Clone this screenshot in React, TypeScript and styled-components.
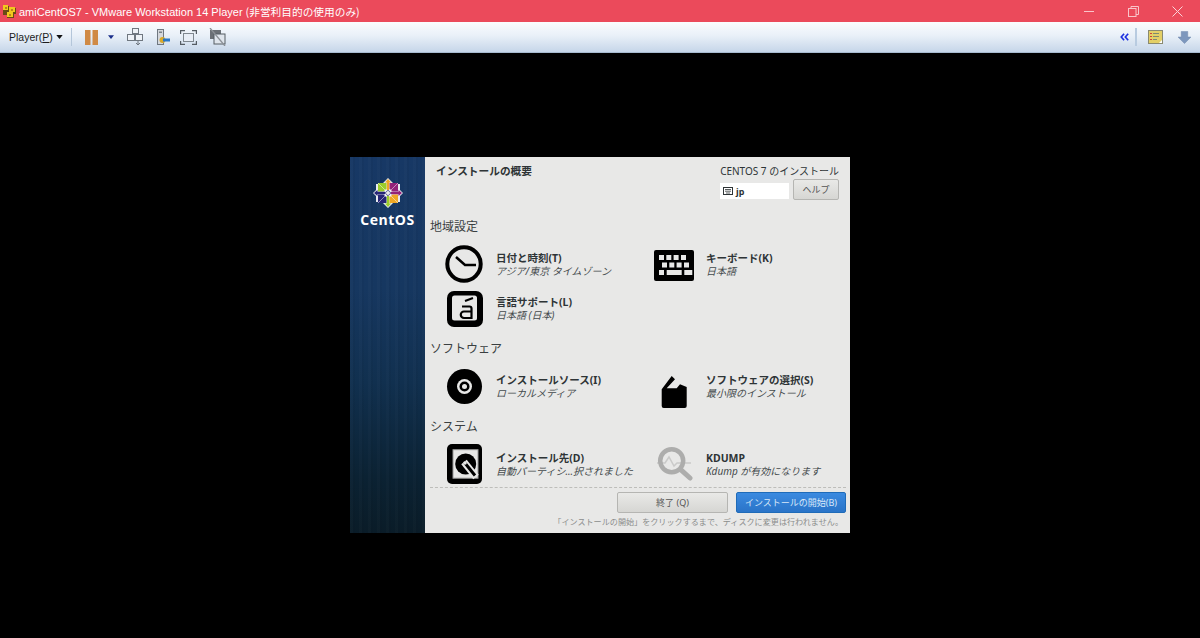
import React from 'react';
import styled, { createGlobalStyle } from 'styled-components';

const GlobalStyle = createGlobalStyle`
  html, body {
    margin: 0;
    height: 100%;
    background: #000;
    overflow: hidden;
  }
`;

const Page = styled.div`
  width: 1200px;
  height: 638px;
  display: flex;
  flex-direction: column;
  font-family: 'Noto Sans', 'Noto Sans CJK JP', sans-serif;
`;

const TitleBar = styled.div`
  height: 22px;
  flex: none;
  display: flex;
  align-items: center;
  padding: 0 1px 0 2px;
  box-sizing: border-box;
  background: #eb4a5b;
  color: #fff;
  font-family: 'Liberation Sans', 'Noto Sans CJK JP', sans-serif;
  font-size: 11px;
`;

const AppTitle = styled.div`
  margin-left: 2px;
  flex: 1;
`;

const TitleCjk = styled.span`
  font-family: 'Noto Sans CJK JP', sans-serif;
  font-size: 10.7px;
`;

const WinButton = styled.div`
  width: 44px;
  height: 22px;
  display: flex;
  align-items: center;
  justify-content: center;
`;

const ToolBar = styled.div`
  height: 31px;
  flex: none;
  display: flex;
  align-items: center;
  background: linear-gradient(#fbfcfe, #e9f0f8 45%, #c6d6e9);
  border-bottom: 1px solid #a8bbd0;
  box-sizing: border-box;
  color: #1c1c1c;
  font-family: 'Liberation Sans', sans-serif;
  font-size: 10.5px;
  padding: 0 9px;
`;

const PlayerMenu = styled.div`
  display: flex;
  align-items: center;
  gap: 5px;
`;

const PlayerLabel = styled.span`
  width: 42px;
  flex: none;
  white-space: nowrap;
`;

const Underline = styled.span`
  text-decoration: underline;
`;

const Separator = styled.div`
  width: 1px;
  height: 18px;
  background: #b4c6da;
  margin: 0 13px 0 8px;
`;

const ToolIcon = styled.svg<{ $gap?: number }>`
  flex: none;
  margin-right: ${p => p.$gap ?? 0}px;
`;

const Spacer = styled.div`
  flex: 1;
`;

const Stage = styled.div`
  flex: 1;
  display: flex;
  justify-content: center;
  padding-top: 104px;
  background: #000;
`;

const Installer = styled.div`
  width: 500px;
  height: 376px;
  display: flex;
`;

const SideBar = styled.div`
  width: 75px;
  flex: none;
  display: flex;
  flex-direction: column;
  align-items: center;
  padding-top: 21px;
  box-sizing: border-box;
  background:
    repeating-linear-gradient(90deg, rgba(255, 255, 255, 0.015) 0 3px, rgba(0, 0, 0, 0.035) 3px 5px, rgba(255, 255, 255, 0) 5px 9px),
    linear-gradient(#173865, #163760 35%, #11304f 60%, #0b2233 85%, #0a1c28);
`;

const LogoText = styled.div`
  margin-top: 3px;
  color: #fff;
  font-family: 'Open Sans', 'Noto Sans', sans-serif;
  font-size: 14px;
  font-weight: 700;
  letter-spacing: 0.5px;
  line-height: 18px;
`;

const Panel = styled.div`
  width: 425px;
  flex: none;
  display: flex;
  flex-direction: column;
  background: #e8e8e7;
  color: #2e3436;
`;

const Header = styled.div`
  height: 59px;
  flex: none;
  display: flex;
  justify-content: space-between;
  padding: 6px 11px 0 11px;
  box-sizing: border-box;
`;

const PageTitle = styled.div`
  font-size: 10.7px;
  font-weight: 700;
  line-height: 16px;
`;

const HeaderRight = styled.div`
  display: flex;
  flex-direction: column;
  align-items: flex-end;
`;

const ProductName = styled.div`
  font-size: 10px;
  line-height: 16px;
`;

const HeaderControls = styled.div`
  display: flex;
  align-items: flex-start;
  gap: 4px;
`;

const LayoutField = styled.div`
  width: 69px;
  height: 16px;
  margin-top: 4px;
  background: #fff;
  display: flex;
  align-items: center;
  gap: 3px;
  padding-left: 3px;
  box-sizing: border-box;
  font-size: 9px;
  font-weight: 700;
`;

const Button = styled.div<{ $primary?: boolean }>`
  display: flex;
  align-items: center;
  justify-content: center;
  box-sizing: border-box;
  border-radius: 2px;
  font-size: 9px;
  border: 1px solid ${p => (p.$primary ? '#1f6bb8' : '#b5b5b2')};
  color: ${p => (p.$primary ? '#d9e8f8' : '#555')};
  background: ${p => (p.$primary ? 'linear-gradient(#3b8ae0, #2a74c8)' : 'linear-gradient(#e9e9e7, #d6d6d3)')};
`;

const HelpButton = styled(Button)`
  width: 46px;
  height: 21px;
`;

const Section = styled.section<{ $last?: boolean }>`
  margin-bottom: ${p => (p.$last ? 0 : 7)}px;
`;

const SectionTitle = styled.div`
  height: 22px;
  line-height: 22px;
  padding-left: 5px;
  font-size: 12px;
  color: #3a3f41;
`;

const SpokeGrid = styled.div`
  margin-top: 5px;
  display: grid;
  grid-template-columns: 210px 197px;
  grid-auto-rows: 44px;
  padding-left: 18px;
`;

const Spoke = styled.div`
  display: flex;
  align-items: center;
`;

const SpokeIcon = styled.svg<{ $faded?: boolean }>`
  width: 42px;
  height: 42px;
  flex: none;
  margin-right: 11px;
  opacity: ${p => (p.$faded ? 0.25 : 1)};
`;

const SpokeText = styled.div`
  display: flex;
  flex-direction: column;
  white-space: nowrap;
`;

const SpokeName = styled.div`
  font-size: 10.5px;
  font-weight: 700;
  line-height: 13px;
`;

const SpokeStatus = styled.div`
  font-size: 10px;
  font-style: italic;
  line-height: 13px;
  color: #444a4c;
`;

const Footer = styled.div`
  flex: 1;
  display: flex;
  flex-direction: column;
  align-items: flex-end;
  margin-right: 4px;
`;

const DashedRule = styled.div`
  align-self: stretch;
  height: 0;
  margin-left: 5px;
  border-top: 1px dashed #bdbdba;
`;

const FooterButtons = styled.div`
  display: flex;
  gap: 8px;
  margin-top: 4px;
`;

const QuitButton = styled(Button)`
  width: 111px;
  height: 21px;
`;

const StartButton = styled(Button)`
  width: 110px;
  height: 21px;
`;

const Notice = styled.div`
  font-size: 8.1px;
  line-height: 12px;
  margin-top: 3px;
  margin-right: 3px;
  color: #8b8d8c;
  white-space: nowrap;
`;

const CentLogo = () => (
  <svg width="30" height="30" viewBox="0 0 30 30">
    <polygon points="15,0 21,6 27,6 27,12 30,15 27,18 27,24 21,24 15,30 9,24 3,24 3,18 0,15 3,12 3,6 9,6" fill="#e8eaf0" />
    <polygon points="5,5 13.500,5 13.500,10.500 10.500,13.500 5,13.500" fill="#9ccd2a" />
    <polygon points="16.500,5 25,5 25,13.500 19.500,13.500 16.500,10.500" fill="#932279" />
    <polygon points="19.500,16.500 25,16.500 25,25 16.500,25 16.500,19.500" fill="#efa724" />
    <polygon points="5,16.500 10.500,16.500 13.500,19.500 13.500,25 5,25" fill="#262577" />
    <path d="M5 5l8.500 8.500M25 5l-8.500 8.500M25 25l-8.500-8.500M5 25l8.500-8.500" stroke="#fff" strokeWidth=".7" opacity=".7" />
    <polygon points="15,1 18,4.500 16.200,4.500 16.200,12 13.800,12 13.800,4.500 12,4.500" fill="#efa724" />
    <polygon points="29,15 25.500,18 25.500,16.200 18,16.200 18,13.800 25.500,13.800 25.500,12" fill="#932279" />
    <polygon points="15,29 12,25.500 13.800,25.500 13.800,18 16.200,18 16.200,25.500 18,25.500" fill="#9ccd2a" />
    <polygon points="1,15 4.500,12 4.500,13.800 12,13.800 12,16.200 4.500,16.200 4.500,18" fill="#262577" />
    <rect x="13" y="13" width="4" height="4" fill="#e8e8e8" stroke="#262577" strokeWidth=".7" transform="rotate(45 15 15)" />
  </svg>
);

const App = () => (
  <Page>
    <GlobalStyle />
    <TitleBar>
      <ToolIcon width="15" height="15" viewBox="0 0 15 15">
        <path d="M1 2h6v2h7v6h-2v4H5v-3H1z" fill="#6a4a14" />
        <path d="M1 1h5v5H1zM7 3h6v5H7zM5 8h6v5H5z" fill="#f2c81e" />
        <path d="M3 3h2v2H3zM9 5h2v2H9zM7 10h2v2H7z" fill="#b9851a" />
      </ToolIcon>
      <AppTitle>amiCentOS7 - VMware Workstation 14 Player <TitleCjk>(非営利目的の使用のみ)</TitleCjk></AppTitle>
      <WinButton>
        <svg width="11" height="11" viewBox="0 0 11 11"><path d="M0 5.500h10" stroke="#f9c4ca" strokeWidth="1" /></svg>
      </WinButton>
      <WinButton>
        <svg width="11" height="11" viewBox="0 0 11 11" fill="none" stroke="#f9c4ca"><rect x="0.5" y="2.5" width="7.5" height="8" /><path d="M3 2.500V.5h7.500v8H8" /></svg>
      </WinButton>
      <WinButton>
        <svg width="11" height="11" viewBox="0 0 11 11" stroke="#f9d5d9"><path d="M.5.5l10 10M10.500.5l-10 10" /></svg>
      </WinButton>
    </TitleBar>
    <ToolBar>
      <PlayerMenu>
        <PlayerLabel>Player(<Underline>P</Underline>)</PlayerLabel>
        <svg width="7" height="4" viewBox="0 0 8 5"><path d="M0 0h8L4 5z" fill="#111" /></svg>
      </PlayerMenu>
      <Separator />
      <ToolIcon width="13" height="15" viewBox="0 0 13 15" $gap={10}>
        <rect x="0" y="0" width="5.500" height="15" fill="#d08a45" />
        <rect x="7.500" y="0" width="5.500" height="15" fill="#d08a45" />
      </ToolIcon>
      <ToolIcon width="6" height="4" viewBox="0 0 8 5" $gap={13}>
        <path d="M0 0h8L4 5z" fill="#1b2f8a" />
      </ToolIcon>
      <ToolIcon width="16" height="18" viewBox="0 0 16 18" $gap={14} fill="#eef2f7" stroke="#6f7780">
        <rect x="5.500" y=".5" width="6" height="5" />
        <rect x=".5" y="6.500" width="7" height="6" />
        <rect x="8.500" y="6.500" width="7" height="6" />
        <path d="M11 13v4M9 15l2 2 2-2" fill="none" />
      </ToolIcon>
      <ToolIcon width="13" height="17" viewBox="0 0 13 17" $gap={10}>
        <rect x=".5" y=".5" width="6" height="15" fill="#d5d8dc" stroke="#6f7780" />
        <rect x="2" y="2.500" width="3" height="1.500" fill="#7b8288" />
        <circle cx="5.500" cy="11" r="3" fill="#d9a92a" />
        <path d="M6 9.500h7v3H6z" fill="#2a78c8" />
      </ToolIcon>
      <ToolIcon width="17" height="15" viewBox="0 0 17 15" $gap={12} fill="none" stroke="#555c63">
        <rect x="3.500" y="3.500" width="10" height="8" fill="#e8eef6" stroke="#7f878f" />
        <path d="M.5 4V.5H5M12 .5h4.500V4M.5 11v3.500H5M12 14.500h4.500V11" strokeWidth="1.400" />
      </ToolIcon>
      <ToolIcon width="17" height="18" viewBox="0 0 17 18">
        <rect x="1" y="2" width="11" height="9" fill="#6b7076" />
        <rect x="5" y="6" width="11" height="10" fill="#dfe5ec" stroke="#555c63" />
        <path d="M1 0l15 18" stroke="#8b9096" strokeWidth="1.300" />
      </ToolIcon>
      <Spacer />
      <ToolIcon width="9" height="10" viewBox="0 0 11 10" fill="none" stroke="#1c2fe0" strokeWidth="2" $gap={6}>
        <path d="M5 1L1.500 5 5 9M10 1L6.500 5 10 9" />
      </ToolIcon>
      <ToolIcon width="2" height="18" viewBox="0 0 2 18" $gap={11}>
        <rect width="2" height="18" fill="#b8cbe0" />
      </ToolIcon>
      <ToolIcon width="15" height="14" viewBox="0 0 15 14" $gap={15}>
        <rect x=".5" y=".5" width="14" height="13" fill="#e3cf66" stroke="#8a8a70" />
        <path d="M2 3h2v1H2zM2 6h2v1H2zM2 9h2v1H2z" fill="#c8443c" />
        <path d="M5 3h6v1H5zM5 6h6v1H5zM5 9h4v1H5z" fill="#7d8a70" />
        <path d="M11 13l3-3v3z" fill="#fff" />
      </ToolIcon>
      <ToolIcon width="13" height="13" viewBox="0 0 14 13">
        <path d="M3.500 0h7v6H14L7 13 0 6h3.500z" fill="#7d97bd" stroke="#6d86aa" strokeWidth=".5" />
      </ToolIcon>
    </ToolBar>
    <Stage>
      <Installer>
        <SideBar>
          <CentLogo />
          <LogoText>CentOS</LogoText>
        </SideBar>
        <Panel>
          <Header>
            <PageTitle>インストールの概要</PageTitle>
            <HeaderRight>
              <ProductName>CENTOS 7 のインストール</ProductName>
              <HeaderControls>
                <LayoutField>
                  <svg width="10" height="8" viewBox="0 0 10 8">
                    <rect x=".5" y=".5" width="9" height="7" fill="none" stroke="#2e3436" />
                    <path d="M2 2.500h6M2 4.200h6M3 6h4" stroke="#2e3436" strokeWidth=".8" />
                  </svg>
                  jp
                </LayoutField>
                <HelpButton>ヘルプ</HelpButton>
              </HeaderControls>
            </HeaderRight>
          </Header>
          <Section>
            <SectionTitle>地域設定</SectionTitle>
            <SpokeGrid>
              <Spoke>
                <SpokeIcon viewBox="0 0 42 42">
                  <circle cx="21" cy="20" r="16.700" fill="none" stroke="#000" strokeWidth="4" />
                  <path d="M13 13L22 21H33" fill="none" stroke="#000" strokeWidth="2.500" />
                </SpokeIcon>
                <SpokeText>
                  <SpokeName>日付と時刻(T)</SpokeName>
                  <SpokeStatus>アジア/東京 タイムゾーン</SpokeStatus>
                </SpokeText>
              </Spoke>
              <Spoke>
                <SpokeIcon viewBox="0 0 42 42">
                  <rect x="1" y="6" width="40" height="31" rx="2" fill="#000" />
                  <g fill="#e8e8e7">
                    <rect x="6" y="11" width="5" height="5" /><rect x="13.300" y="11" width="5" height="5" /><rect x="20.600" y="11" width="5" height="5" /><rect x="28" y="11" width="5" height="5" />
                    <rect x="9" y="18.500" width="5" height="5" /><rect x="16.300" y="18.500" width="5" height="5" /><rect x="23.600" y="18.500" width="5" height="5" /><rect x="31" y="18.500" width="5" height="5" />
                    <rect x="6" y="26" width="5" height="5" /><rect x="13.700" y="26" width="15" height="5" /><rect x="31.300" y="26" width="8" height="5" />
                  </g>
                </SpokeIcon>
                <SpokeText>
                  <SpokeName>キーボード(K)</SpokeName>
                  <SpokeStatus>日本語</SpokeStatus>
                </SpokeText>
              </Spoke>
              <Spoke>
                <SpokeIcon viewBox="0 0 42 42">
                  <rect x="4" y="3" width="36" height="36" rx="7" fill="#000" />
                  <rect x="9" y="7.500" width="25" height="25" rx="2.500" fill="#e8e8e7" />
                  <path d="M22 13l8-3" stroke="#000" strokeWidth="2" />
                  <path d="M19 18.500h7.500a2 2 0 012 2V30H21a3.200 3.200 0 010-6.500h7.500" fill="none" stroke="#000" strokeWidth="2.200" />
                </SpokeIcon>
                <SpokeText>
                  <SpokeName>言語サポート(L)</SpokeName>
                  <SpokeStatus>日本語 (日本)</SpokeStatus>
                </SpokeText>
              </Spoke>
            </SpokeGrid>
          </Section>
          <Section>
            <SectionTitle>ソフトウェア</SectionTitle>
            <SpokeGrid>
              <Spoke>
                <SpokeIcon viewBox="0 0 42 42">
                  <circle cx="21.500" cy="20.500" r="17.500" fill="#000" />
                  <circle cx="21.500" cy="20.500" r="7.500" fill="#e8e8e7" />
                  <circle cx="21.500" cy="20.500" r="5" fill="#000" />
                  <circle cx="21.500" cy="20.500" r="2.500" fill="#e8e8e7" />
                </SpokeIcon>
                <SpokeText>
                  <SpokeName>インストールソース(I)</SpokeName>
                  <SpokeStatus>ローカルメディア</SpokeStatus>
                </SpokeText>
              </Spoke>
              <Spoke>
                <SpokeIcon viewBox="0 0 42 42">
                  <path d="M18.700 10L8.700 23.300V40a2 2 0 002 2H31.700a2 2 0 002-2V21L27 18.300L23.700 22.300H13.700L22 13.300Z" fill="#000" />
                </SpokeIcon>
                <SpokeText>
                  <SpokeName>ソフトウェアの選択(S)</SpokeName>
                  <SpokeStatus>最小限のインストール</SpokeStatus>
                </SpokeText>
              </Spoke>
            </SpokeGrid>
          </Section>
          <Section $last>
            <SectionTitle>システム</SectionTitle>
            <SpokeGrid>
              <Spoke>
                <SpokeIcon viewBox="0 0 42 42">
                  <rect x="4" y="0" width="35" height="40" rx="5" fill="#000" />
                  <rect x="10" y="5.700" width="25" height="28.500" fill="#e8e8e7" stroke="#9a9a9a" strokeWidth="1" />
                  <circle cx="22.700" cy="20" r="10.500" fill="#000" />
                  <path d="M21 18L33 33" stroke="#e8e8e7" strokeWidth="7" />
                  <path d="M21.500 18.500L32 31.500" stroke="#000" strokeWidth="3" />
                  <circle cx="22" cy="19" r="1.800" fill="#e8e8e7" />
                </SpokeIcon>
                <SpokeText>
                  <SpokeName>インストール先(D)</SpokeName>
                  <SpokeStatus>自動パーティシ...択されました</SpokeStatus>
                </SpokeText>
              </Spoke>
              <Spoke>
                <SpokeIcon viewBox="0 0 42 42" $faded>
                  <circle cx="18.700" cy="16.700" r="11.500" fill="none" stroke="#000" strokeWidth="4.500" />
                  <path d="M27.700 25.700L37 34" stroke="#000" strokeWidth="5" strokeLinecap="round" />
                  <path d="M4 19h8l4-6 5 9 3-3h14" fill="none" stroke="#000" strokeWidth="1.500" opacity=".5" />
                </SpokeIcon>
                <SpokeText>
                  <SpokeName>KDUMP</SpokeName>
                  <SpokeStatus>Kdump が有効になります</SpokeStatus>
                </SpokeText>
              </Spoke>
            </SpokeGrid>
          </Section>
          <Footer>
            <DashedRule />
            <FooterButtons>
              <QuitButton>終了 (Q)</QuitButton>
              <StartButton $primary>インストールの開始(B)</StartButton>
            </FooterButtons>
            <Notice>「インストールの開始」をクリックするまで、ディスクに変更は行われません。</Notice>
          </Footer>
        </Panel>
      </Installer>
    </Stage>
  </Page>
);

export default App;
